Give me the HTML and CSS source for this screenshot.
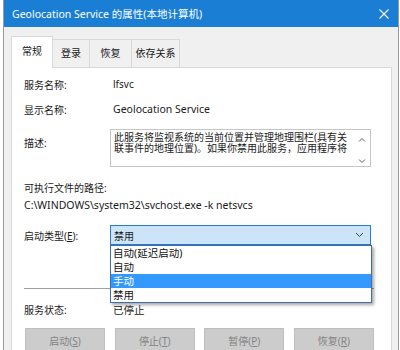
FILE: index.html
```html
<!DOCTYPE html>
<html lang="zh-CN">
<head>
  <meta charset="UTF-8">
  <title>Geolocation Service 的属性(本地计算机)</title>
  <link rel="stylesheet" href="styles.css">
</head>
<body>
  <div class="window">
    <div class="titlebar">
      <span class="title">Geolocation Service 的属性(本地计算机)</span>
      <svg class="close" width="10" height="10" viewBox="0 0 10 10">
        <path d="M0.5 0.5 L9.5 9.5 M9.5 0.5 L0.5 9.5" stroke="#fff" stroke-width="1.1"/>
      </svg>
    </div>

    <div class="client">
      <div class="tabs">
        <div class="tab active">常规</div>
        <div class="tab tab-login">登录</div>
        <div class="tab tab-recover">恢复</div>
        <div class="tab tab-deps">依存关系</div>
      </div>

      <div class="panel">
        <div class="row row-name">
          <span class="label">服务名称:</span>
          <span class="value">lfsvc</span>
        </div>
        <div class="row row-display">
          <span class="label">显示名称:</span>
          <span class="value">Geolocation Service</span>
        </div>
        <div class="row row-desc">
          <span class="label">描述:</span>
          <div class="textbox">
            <div class="textbox-text">此服务将监视系统的当前位置并管理地理围栏(具有关联事件的地理位置)。如果你禁用此服务，应用程序将</div>
            <div class="scroll">
              <svg width="8" height="6" viewBox="0 0 8 6"><path d="M1 4.5 L4 1.5 L7 4.5" fill="none" stroke="#606060" stroke-width="1"/></svg>
              <svg width="8" height="6" viewBox="0 0 8 6"><path d="M1 1.5 L4 4.5 L7 1.5" fill="none" stroke="#606060" stroke-width="1"/></svg>
            </div>
          </div>
        </div>

        <div class="path-label">可执行文件的路径:</div>
        <div class="path">C:\WINDOWS\system32\svchost.exe -k netsvcs</div>

        <div class="row row-start">
          <span class="label">启动类型(<u>E</u>):</span>
          <div class="combo-wrap">
            <div class="combo">
              <span>禁用</span>
              <svg width="9" height="6" viewBox="0 0 9 6"><path d="M1 1 L4.5 4.5 L8 1" fill="none" stroke="#404040" stroke-width="1"/></svg>
            </div>
            <ul class="dropdown">
              <li>自动(延迟启动)</li>
              <li>自动</li>
              <li class="selected">手动</li>
              <li>禁用</li>
            </ul>
          </div>
        </div>

        <div class="separator"></div>

        <div class="row row-status">
          <span class="label">服务状态:</span>
          <span class="value">已停止</span>
        </div>

        <div class="buttons">
          <button>启动(<u>S</u>)</button>
          <button>停止(<u>T</u>)</button>
          <button>暂停(<u>P</u>)</button>
          <button>恢复(<u>R</u>)</button>
        </div>
      </div>
    </div>
  </div>
</body>
</html>
```

FILE: styles.css
```css
/* Page */
body {
  margin: 0;
  background-color: #ffffff;
  font-family: "Noto Sans", "Noto Sans CJK SC", sans-serif;
  font-size: 10px;
  color: #1a1a1a;
  overflow: hidden;
  height: 350px;
}

.window {
  margin-left: 3px;
  width: 394px;
  height: 350px;
  overflow: hidden;
  border-left: 1px solid #9a9a9a;
  border-right: 1px solid #9a9a9a;
  background-color: #f0f0f0;
}

/* Title bar */
.titlebar {
  height: 27px;
  background-color: #1a7fd4;
  display: flex;
  align-items: center;
  justify-content: space-between;
  padding: 0 9px 0 8px;
  color: #ffffff;
}

.title {
  font-size: 10.5px;
}

.close {
  display: block;
}

/* Client area */
.client {
  padding: 9px 6px 0 7px;
}

.tabs {
  display: flex;
  align-items: flex-end;
  height: 31px;
}

.tab {
  height: 28px;
  line-height: 26px;
  text-align: center;
  border: 1px solid #d9d9d9;
  border-bottom: none;
  border-left: none;
  background-color: #f0f0f0;
  box-sizing: border-box;
}

.tab-login {
  width: 37px;
}

.tab-recover {
  width: 42px;
}

.tab-deps {
  width: 48px;
}

.tab.active {
  height: 32px;
  width: 42px;
  line-height: 28px;
  background-color: #ffffff;
  border-left: 1px solid #d9d9d9;
  margin-bottom: -1px;
  position: relative;
}

.panel {
  background-color: #ffffff;
  border: 1px solid #d9d9d9;
  height: 300px;
  padding: 0 17px 0 12px;
}

/* Rows */
.row {
  display: flex;
  align-items: center;
}

.label {
  width: 88px;
  flex-shrink: 0;
}

.value {
  margin-left: 1px;
}

.row-name {
  margin-top: 8px;
  height: 16px;
}

.row-display {
  margin-top: 9px;
  height: 16px;
}

.row-display .value {
  font-size: 10.5px;
}

.row-desc {
  margin-top: 12px;
  align-items: flex-start;
}

.row-desc .label {
  margin-top: 6px;
  margin-right: -2px;
}

.textbox {
  width: 259px;
  height: 36px;
  border: 1px solid #c6c6c6;
  display: flex;
}

.textbox-text {
  flex: 1;
  padding: 2px 4px 0 3px;
  line-height: 11px;
  font-size: 10px;
}

.scroll {
  width: 16px;
  display: flex;
  flex-direction: column;
  justify-content: space-between;
  align-items: center;
  padding: 7px 0 2px;
}

.scroll svg {
  display: block;
}

.path-label {
  margin-top: 13px;
  height: 16px;
  line-height: 16px;
}

.path {
  margin-top: 1px;
  height: 16px;
  line-height: 16px;
  font-size: 10.5px;
}

.row-start {
  margin-top: 12px;
}

.row-start .label {
  margin-right: -2px;
}

.combo-wrap {
  position: relative;
}

.combo {
  width: 250px;
  height: 18px;
  border: 1px solid #2a7ad2;
  background-color: #cce4f7;
  display: flex;
  align-items: center;
  justify-content: space-between;
  padding: 0 6px 0 3px;
}

/* Open list lies over the rest of the panel */
.dropdown {
  position: absolute;
  top: 20px;
  left: 0;
  width: 260px;
  margin: 0;
  padding: 0;
  list-style: none;
  background-color: #ffffff;
  border: 1px solid #3e6fa6;
  box-shadow: 2px 2px 3px rgba(0, 0, 0, 0.35);
  z-index: 2;
}

.dropdown li {
  height: 14px;
  line-height: 14px;
  padding-left: 2px;
  font-size: 10.5px;
  color: #111111;
}

.dropdown li.selected {
  background-color: #3399ff;
  color: #ffffff;
}

.separator {
  margin-top: 43px;
  border-top: 1px solid #a0a0a0;
}

.row-status {
  margin-top: 12px;
  height: 16px;
}

.row-status .value {
  font-size: 10.5px;
}

/* Buttons */
.buttons {
  margin-top: 11px;
  display: flex;
  justify-content: space-between;
  padding-left: 1px;
}

.buttons button {
  width: 80px;
  height: 24px;
  border: 1px solid #bfbfbf;
  background-color: #cccccc;
  color: #838383;
  font-family: "Noto Sans", "Noto Sans CJK SC", sans-serif;
  font-size: 10px;
  padding: 0;
}
```
